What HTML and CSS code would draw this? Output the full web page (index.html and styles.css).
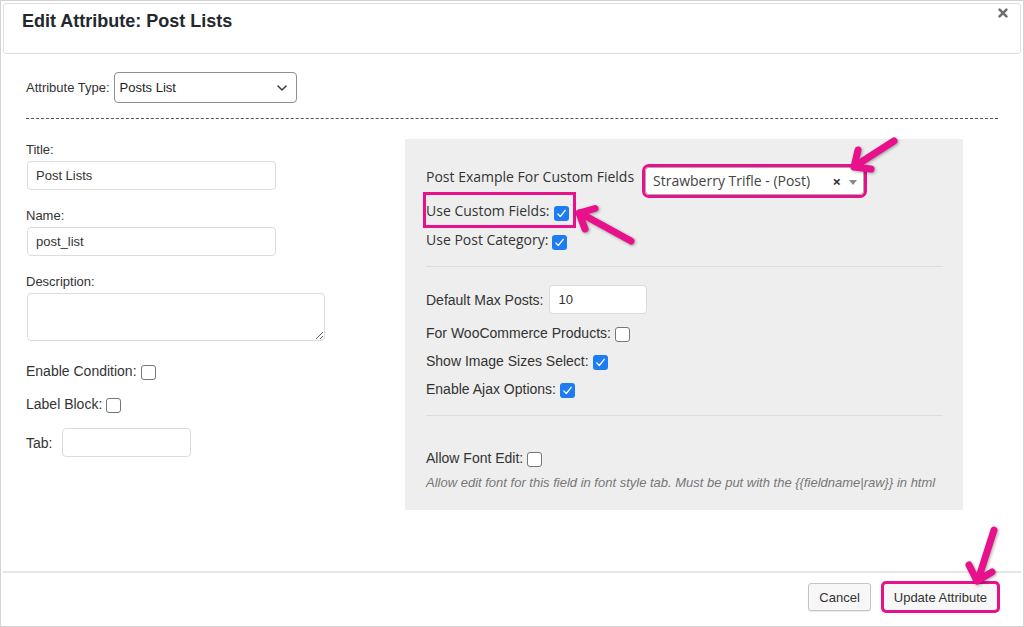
FILE: index.html
```html
<!DOCTYPE html>
<html lang="en">
<head>
<meta charset="utf-8">
<title>Edit Attribute: Post Lists</title>
<link rel="stylesheet" href="styles.css">
</head>
<body>
<div class="dialog">
  <div class="dlg-header">
    <h1 class="dlg-title">Edit Attribute: Post Lists</h1>
    <svg class="dlg-close" width="10" height="10" viewBox="0 0 10 10"><path d="M1.6 1.6 L8.4 8.4 M8.4 1.6 L1.6 8.4" stroke="#6e6e6e" stroke-width="2.6" stroke-linecap="round"/></svg>
  </div>

  <div class="dlg-body">
    <div class="type-row">
      <span class="lbl13">Attribute Type:</span>
      <div class="fake-select">
        <span>Posts List</span>
        <svg width="10" height="6" viewBox="0 0 10 6"><path d="M1 1 L5 5 L9 1" fill="none" stroke="#3a3a3a" stroke-width="1.5" stroke-linecap="round" stroke-linejoin="round"/></svg>
      </div>
    </div>

    <div class="dashed"></div>

    <div class="cols">
      <div class="col-left">
        <div class="field">
          <span class="field-lbl">Title:</span>
          <input class="inp" type="text" value="Post Lists">
        </div>
        <div class="field">
          <span class="field-lbl">Name:</span>
          <input class="inp" type="text" value="post_list">
        </div>
        <div class="field">
          <span class="field-lbl">Description:</span>
          <textarea class="ta"></textarea>
        </div>
        <div class="check-row row-enable">
          <span>Enable Condition:</span><span class="cb cb-off"></span>
        </div>
        <div class="check-row row-label">
          <span>Label Block:</span><span class="cb cb-off"></span>
        </div>
        <div class="tab-row">
          <span>Tab:</span>
          <input class="inp inp-tab" type="text" value="">
        </div>
      </div>

      <div class="panel">
        <div class="pe-row">
          <span class="pe-label">Post Example For Custom Fields</span>
          <div class="s2 hl">
            <span class="s2-text">Strawberry Trifle - (Post)</span>
            <span class="s2-clear">×</span>
            <span class="s2-arrow"></span>
          </div>
        </div>
        <div class="os-row hl-row">
          <span>Use Custom Fields:</span>
          <span class="cb cb-on"><svg width="15" height="15" viewBox="0 0 15 15"><path d="M3.8 7.9 L6.3 10.5 L11.2 4.3" fill="none" stroke="#fff" stroke-width="1.3" stroke-linecap="round" stroke-linejoin="round"/></svg></span>
        </div>
        <div class="os-row row-cat">
          <span>Use Post Category:</span>
          <span class="cb cb-on"><svg width="15" height="15" viewBox="0 0 15 15"><path d="M3.8 7.9 L6.3 10.5 L11.2 4.3" fill="none" stroke="#fff" stroke-width="1.3" stroke-linecap="round" stroke-linejoin="round"/></svg></span>
        </div>

        <div class="sep"></div>

        <div class="max-row">
          <span>Default Max Posts:</span>
          <input class="inp inp-max" type="text" value="10">
        </div>
        <div class="check-row row-woo">
          <span>For WooCommerce Products:</span><span class="cb cb-off"></span>
        </div>
        <div class="check-row row-next">
          <span>Show Image Sizes Select:</span>
          <span class="cb cb-on"><svg width="15" height="15" viewBox="0 0 15 15"><path d="M3.8 7.9 L6.3 10.5 L11.2 4.3" fill="none" stroke="#fff" stroke-width="1.3" stroke-linecap="round" stroke-linejoin="round"/></svg></span>
        </div>
        <div class="check-row row-next">
          <span>Enable Ajax Options:</span>
          <span class="cb cb-on"><svg width="15" height="15" viewBox="0 0 15 15"><path d="M3.8 7.9 L6.3 10.5 L11.2 4.3" fill="none" stroke="#fff" stroke-width="1.3" stroke-linecap="round" stroke-linejoin="round"/></svg></span>
        </div>

        <div class="sep"></div>

        <div class="check-row row-font">
          <span>Allow Font Edit:</span><span class="cb cb-off"></span>
        </div>
        <p class="hint">Allow edit font for this field in font style tab. Must be put with the {{fieldname|raw}} in html</p>
      </div>
    </div>
  </div>

  <div class="dlg-footer">
    <button class="btn" type="button">Cancel</button>
    <button class="btn btn-hl" type="button">Update Attribute</button>
  </div>
</div>

<svg class="arrows" width="1024" height="627" viewBox="0 0 1024 627">
  <g fill="none" stroke="#e8118b" stroke-width="7" stroke-linecap="round" stroke-linejoin="round">
    <path d="M894 141 L855 166"/>
    <path d="M858 150 L854 167 L871 169"/>
    <path d="M631 241 L580 213"/>
    <path d="M595 208.5 L579 213 L585 229"/>
    <path d="M994 530 L978 580"/>
    <path d="M969 565 L977 581 L992 572"/>
  </g>
</svg>
</body>
</html>
```

FILE: styles.css
```css
* {
  box-sizing: border-box;
}

html,
body {
  margin: 0;
  padding: 0;
  background: #fff;
}

body {
  width: 1024px;
  height: 627px;
  overflow: hidden;
  font-family: "Liberation Sans", Arial, sans-serif;
  color: #333;
}

.dialog {
  width: 1024px;
  height: 627px;
  border: 1px solid #d4d4d4;
  display: flex;
  flex-direction: column;
  background: #fff;
}

/* header */
.dlg-header {
  margin: 2px 2px 0;
  height: 51px;
  flex: none;
  border: 1px solid #dedede;
  border-radius: 3px;
  display: flex;
  justify-content: space-between;
  align-items: flex-start;
  padding: 0 12px 0 18px;
}

.dlg-title {
  margin: 0;
  padding-top: 6px;
  font-size: 18px;
  line-height: 22px;
  font-weight: bold;
  color: #23282d;
}

.dlg-close {
  display: block;
  margin-top: 4px;
}

/* body */
.dlg-body {
  flex: 1;
  padding: 0 25px;
}

.type-row {
  display: flex;
  align-items: center;
  gap: 4px;
  margin-top: 18px;
}

.lbl13 {
  font-size: 13px;
  line-height: 16px;
}

.fake-select {
  width: 183px;
  height: 31px;
  border: 1px solid #8c8f94;
  border-radius: 4px;
  display: flex;
  align-items: center;
  justify-content: space-between;
  padding: 0 9px 0 5px;
  font-size: 13px;
  color: #222;
  background: #fff;
}

.dashed {
  margin-top: 15px;
  border-top: 1px dashed #555;
}

.cols {
  display: grid;
  grid-template-columns: 379px 558px;
  align-items: start;
  margin-top: 20px;
}

/* left column */
.col-left {
  padding-top: 3px;
}

.field + .field {
  margin-top: 18px;
}

.field-lbl {
  display: block;
  font-size: 13px;
  line-height: 16px;
  margin-bottom: 3px;
}

.inp {
  display: block;
  width: 249px;
  height: 29px;
  margin: 0 0 0 1px;
  padding: 0 8px;
  border: 1px solid #dcdcdc;
  border-radius: 4px;
  background: #fff;
  font: 13px "Liberation Sans", Arial, sans-serif;
  color: #333;
  outline: none;
}

.ta {
  display: block;
  width: 298px;
  height: 48px;
  margin: 0 0 0 1px;
  padding: 4px 8px;
  border: 1px solid #dcdcdc;
  border-radius: 4px;
  background: #fff;
  font: 13px "Liberation Sans", Arial, sans-serif;
  outline: none;
}

.check-row {
  display: flex;
  align-items: flex-start;
  font-size: 14px;
  line-height: 20px;
}

.cb {
  flex: none;
  display: block;
  width: 15px;
  height: 15px;
  margin: 4px 0 0 4px;
  border-radius: 3px;
}

.cb svg {
  display: block;
}

.cb-off {
  border: 1px solid #767676;
  background: #fff;
}

.cb-on {
  background: #1d7cf2;
}

.row-enable {
  margin-top: 20px;
}

.row-label {
  margin-top: 13px;
}

.tab-row {
  display: flex;
  align-items: center;
  margin-top: 14px;
  font-size: 14px;
  line-height: 20px;
}

.inp-tab {
  width: 129px;
  margin-left: 10px;
}

/* right panel */
.panel {
  background: #eeeeee;
  padding: 28px 20px 18px 21px;
}

.pe-row {
  display: flex;
  align-items: flex-start;
}

.pe-label {
  flex: none;
  width: 219px;
  font-family: "Open Sans", "Liberation Sans", sans-serif;
  font-size: 14px;
  line-height: 20px;
}

.s2 {
  width: 219px;
  height: 28px;
  display: flex;
  align-items: center;
  padding-left: 7px;
  border: 1px solid #aaa;
  border-radius: 4px;
  background: #fff;
  font-family: "Open Sans", "Liberation Sans", sans-serif;
  font-size: 14px;
  color: #444;
}

.hl {
  outline: 3px solid #e8118b;
}

.s2-text {
  flex: 1;
  line-height: 26px;
  white-space: nowrap;
}

.s2-clear {
  font-weight: bold;
  font-size: 15px;
  line-height: 26px;
  color: #333;
  margin-right: 8px;
}

.s2-arrow {
  width: 0;
  height: 0;
  border-style: solid;
  border-width: 5px 4px 0 4px;
  border-color: #888 transparent transparent transparent;
  margin: 2px 6px 0 0;
}

.os-row {
  display: flex;
  align-items: flex-start;
  width: fit-content;
  font-family: "Open Sans", "Liberation Sans", sans-serif;
  font-size: 14px;
  line-height: 20px;
}

.os-row .cb {
  margin-top: 5px;
}

.hl-row {
  padding: 6px 4px 4px 0;
  outline: 3px solid #e8118b;
}

.row-cat {
  margin-top: 5px;
}

.sep {
  height: 1px;
  background: #dcdcdc;
  margin-top: 16px;
}

.max-row {
  display: flex;
  align-items: center;
  margin-top: 18px;
  font-size: 14px;
  line-height: 20px;
}

.inp-max {
  width: 98px;
  margin-left: 5px;
  padding: 0 9px;
}

.row-woo {
  margin-top: 9px;
}

.row-next {
  margin-top: 8px;
}

.row-font {
  margin-top: 32px;
}

.hint {
  margin: 6px 0 0;
  font-size: 13px;
  line-height: 18px;
  font-style: italic;
  color: #777;
}

/* footer */
.dlg-footer {
  flex: none;
  height: 55px;
  margin: 0 2px;
  border-top: 2px solid #e6e6e6;
  display: flex;
  justify-content: flex-end;
  align-items: flex-start;
  gap: 12px;
  padding: 10px 23px 0 0;
}

.btn {
  height: 28px;
  margin: 0;
  padding: 0 10px;
  border: 1px solid #c4c4c4;
  border-radius: 3px;
  background: #f7f7f7;
  box-shadow: 0 1px 1px rgba(0, 0, 0, 0.08);
  font: 13px "Liberation Sans", Arial, sans-serif;
  color: #333;
}

.btn-hl {
  outline: 3px solid #e8118b;
  outline-offset: -1px;
}

/* annotation arrows overlay */
.arrows {
  position: absolute;
  top: 0;
  left: 0;
  pointer-events: none;
  filter: drop-shadow(1px 1px 1.5px rgba(0, 0, 0, 0.35));
}
```
